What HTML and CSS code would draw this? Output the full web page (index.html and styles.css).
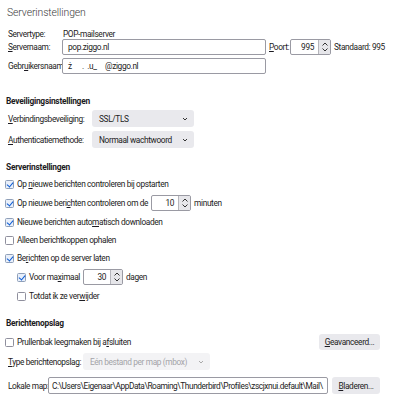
FILE: index.html
```html
<!DOCTYPE html>
<html lang="nl">
<head>
<meta charset="utf-8">
<link rel="stylesheet" href="styles.css">
</head>
<body>
<div class="page">
  <h1 class="title">Serverinstellingen</h1>

  <div class="row r-type"><span class="lbl w55">Servertype:</span><span>POP-mailserver</span></div>
  <div class="row r-name">
    <span class="lbl w54"><u>S</u>ervernaam:</span>
    <span class="input host">pop.ziggo.nl</span>
    <span class="lbl port"><u>P</u>oort:</span>
    <span class="spin w41"><span class="num">995</span><span class="arrows"><svg viewBox="0 0 8 12" width="8" height="12"><path d="M1.5 4.5 L4 2 L6.5 4.5 M1.5 7.5 L4 10 L6.5 7.5" fill="none" stroke="#333" stroke-width="1"/></svg></span></span>
    <span class="after">Standaard: 995</span>
  </div>
  <div class="row r-user">
    <span class="lbl w54">Gebr<u>u</u>ikersnaam:</span>
    <span class="input host">ż&nbsp;&nbsp;&nbsp;&nbsp;&nbsp;&nbsp;.&nbsp;&nbsp;.u_&nbsp;&nbsp;&nbsp;&nbsp;&nbsp;@ziggo.nl</span>
  </div>

  <h2 class="head h-sec">Beveiligingsinstellingen</h2>
  <div class="row r-sel1">
    <span class="lbl w84"><u>V</u>erbindingsbeveiliging:</span>
    <span class="select sel-a">SSL/TLS<svg class="chev" viewBox="0 0 8 6" width="8" height="6"><path d="M2 2 L4 4 L6 2" fill="none" stroke="#333" stroke-width="1"/></svg></span>
  </div>
  <div class="row r-sel2">
    <span class="lbl w84"><u>A</u>uthenticatiemethode:</span>
    <span class="select sel-a">Normaal wachtwoord<svg class="chev" viewBox="0 0 8 6" width="8" height="6"><path d="M2 2 L4 4 L6 2" fill="none" stroke="#333" stroke-width="1"/></svg></span>
  </div>

  <h2 class="head h-srv">Serverinstellingen</h2>
  <div class="row cbrow c1"><span class="cb on"></span><span>Op <u>n</u>ieuwe berichten controleren bij opstarten</span></div>
  <div class="row cbrow c2"><span class="cb on"></span><span>Op nieuwe beri<u>c</u>hten controleren om de</span>
    <span class="spin w40 ml3"><span class="num">10</span><span class="arrows"><svg viewBox="0 0 8 12" width="8" height="12"><path d="M1.5 4.5 L4 2 L6.5 4.5 M1.5 7.5 L4 10 L6.5 7.5" fill="none" stroke="#333" stroke-width="1"/></svg></span></span>
    <span class="after">minuten</span></div>
  <div class="row cbrow c3"><span class="cb on"></span><span>Nieuwe berichten auto<u>m</u>atisch downloaden</span></div>
  <div class="row cbrow c4"><span class="cb"></span><span>Alleen berichtkoppen ophalen</span></div>
  <div class="row cbrow c5"><span class="cb on"></span><span>Be<u>r</u>ichten op de server laten</span></div>
  <div class="row cbrow c6 sub"><span class="cb on"></span><span>Voor ma<u>x</u>imaal</span>
    <span class="spin w40 ml3"><span class="num">30</span><span class="arrows"><svg viewBox="0 0 8 12" width="8" height="12"><path d="M1.5 4.5 L4 2 L6.5 4.5 M1.5 7.5 L4 10 L6.5 7.5" fill="none" stroke="#333" stroke-width="1"/></svg></span></span>
    <span class="after">dagen</span></div>
  <div class="row cbrow c7 sub"><span class="cb"></span><span>Totdat ik ze ver<u>w</u>ijder</span></div>

  <h2 class="head h-opslag">Berichtenopslag</h2>
  <div class="row r-trash">
    <span class="cb"></span><span>Prullenbak leegmaken bij a<u>f</u>sluiten</span>
    <span class="btn adv"><u>G</u>eavanceerd...</span>
  </div>
  <div class="row r-store">
    <span class="lbl w75"><u>T</u>ype berichtenopslag:</span>
    <span class="select disabled sel-b">Eén bestand per map (mbox)<svg class="chev" viewBox="0 0 8 6" width="8" height="6"><path d="M2 2 L4 4 L6 2" fill="none" stroke="#aaa" stroke-width="1"/></svg></span>
  </div>
  <div class="row r-local">
    <span class="lbl w40">Lokale map:</span>
    <span class="input path">C:\Users\Eigenaar\AppData\Roaming\Thunderbird\Profiles\zscjxnui.default\Mail\</span>
    <span class="btn browse"><u>B</u>laderen...</span>
  </div>
</div>
</body>
</html>
```

FILE: styles.css
```css
* { box-sizing: border-box; }
html, body { margin: 0; padding: 0; background: #fff; }
body {
  font-family: Roboto, "Noto Sans", sans-serif;
  font-size: 8.3px;
  letter-spacing: -0.36px;
  line-height: 10px;
  color: #1c1b22;
  width: 397px;
  height: 400px;
  overflow: hidden;
}
u { text-decoration: underline; text-underline-offset: 1px; text-decoration-thickness: 0.5px; }
.title {
  margin: 0;
  padding: 3px 0 0 7px;
  height: 24px;
  font-size: 10.4px;
  letter-spacing: -0.1px;
  font-weight: 300;
  color: #3a3a3a;
  line-height: 20px;
}
.row {
  display: flex;
  align-items: center;
  padding-left: 8px;
  white-space: nowrap;
}
.lbl { flex: none; letter-spacing: -0.38px; }
.w55 { width: 55px; }
.w54 { width: 54px; }
.w84 { width: 84px; }
.w75 { width: 75px; }
.w40 { width: 40px; }
.r-type { height: 10px; margin-top: 5px; }
.r-name { height: 16px; margin-top: 0; }
.r-user { height: 16px; margin-top: 3px; }

.input {
  display: flex;
  align-items: center;
  height: 16px;
  border: 1px solid #9a9aa3;
  border-radius: 2px;
  background: #fff;
  padding: 0 5px;
  overflow: hidden;
  flex: none;
}
.host { width: 204px; }
.port { margin-left: 3px; width: 21px; }
.spin {
  display: flex;
  height: 16px;
  border: 1px solid #9a9aa3;
  border-radius: 2px;
  background: #fff;
  overflow: hidden;
  flex: none;
}
.spin .num { flex: 1; text-align: right; padding-right: 4px; line-height: 14px; }
.spin.w41 { width: 41px; }
.spin.w40 { width: 40px; }
.ml3 { margin-left: 3px; }
.arrows {
  width: 12px;
  flex: none;
  border-left: 1px solid #b5b5bb;
  background: #e6e6ea;
  display: flex;
  align-items: center;
  justify-content: center;
}
.after { margin-left: 3px; }

.head {
  margin: 0;
  font-size: 8.4px;
  letter-spacing: -0.25px;
  font-weight: 700;
  color: #1c1b22;
  padding-left: 6px;
  line-height: 12px;
  height: 12px;
}
.h-sec { margin-top: 21px; }
.h-srv { margin-top: 13px; }
.h-opslag { margin-top: 12px; }

.r-sel1 { height: 17px; margin-top: 3px; }
.r-sel2 { height: 17px; margin-top: 4px; }
.select {
  display: flex;
  align-items: center;
  justify-content: space-between;
  height: 17px;
  padding: 0 5px 0 7px;
  background: #e9e9ed;
  border-radius: 3px;
  flex: none;
}
.sel-a { width: 102px; }
.sel-b { width: 127px; }
.select.disabled { color: #a3a3a8; background: #f3f3f5; }

.cbrow { height: 18px; padding-left: 5px; }
.c1 { margin-top: 2px; }
.c2 { margin-top: 1px; }
.c3 { margin-top: 1px; }
.c4 { margin-top: 0; }
.c5 { margin-top: 0; }
.c6 { margin-top: 1px; }
.c7 { margin-top: 1px; }
.sub { padding-left: 17px; }
.cb {
  flex: none;
  width: 9px;
  height: 9px;
  margin-right: 3px;
  border: 1px solid #8f8f9d;
  border-radius: 1.5px;
  background: #fff;
  position: relative;
}
.cb.on {
  background: #e8effa;
  border-color: #8f9fb8;
}
.cb.on::after {
  content: "";
  position: absolute;
  left: 2px;
  top: 0px;
  width: 3px;
  height: 5px;
  border: solid #0b5cd5;
  border-width: 0 1.5px 1.5px 0;
  transform: rotate(40deg);
}

.r-trash { height: 18px; padding-left: 5px; margin-top: 4px; }
.btn {
  display: flex;
  align-items: center;
  justify-content: center;
  height: 16px;
  background: #e9e9ed;
  border-radius: 3px;
  flex: none;
}
.adv { margin-left: auto; margin-right: 17px; width: 61px; }
.r-store { height: 17px; margin-top: 2px; }
.r-local { height: 17px; margin-top: 7px; }
.path { width: 280px; padding: 0 2px 0 3px; height: 17px; letter-spacing: -0.42px; }
.browse { width: 48px; margin-left: 4px; height: 17px; }
```
